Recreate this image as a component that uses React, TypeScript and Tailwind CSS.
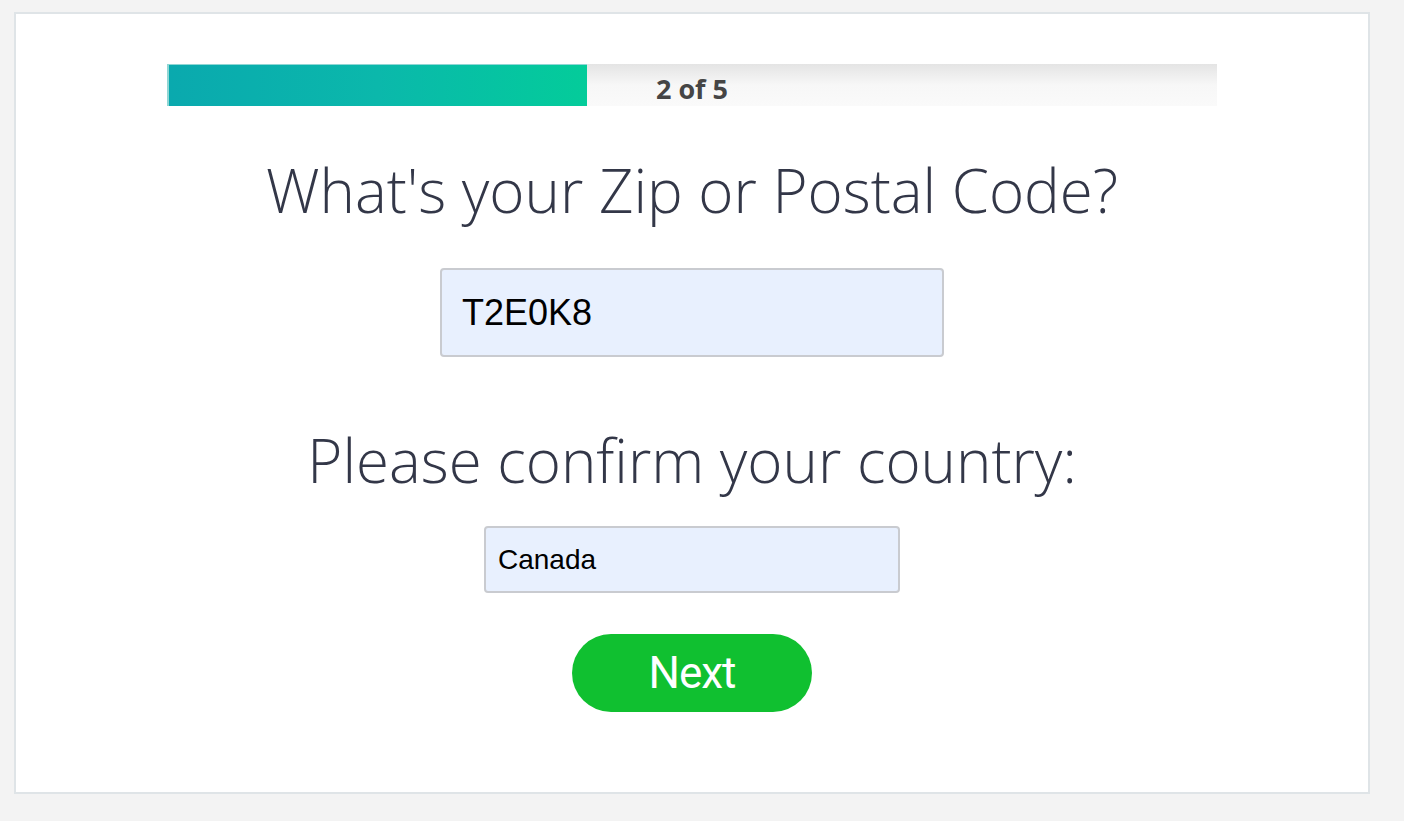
import React from 'react';

const App: React.FC = () => {
  return (
    <div className="min-h-screen bg-[#f3f3f3] pt-[12px] pl-[14px]" style={{ fontFamily: '"Open Sans", sans-serif' }}>
      <div className="w-[1356px] h-[782px] bg-white border-2 border-[#dfe4e7] flex flex-col items-center pt-[50px]">
        {/* Barra de progreso */}
        <div className="relative w-[1050px] h-[42px] bg-gradient-to-b from-[#e4e4e4] via-[#f7f7f7] to-[#fafafa]">
          <div className="absolute left-0 top-0 h-full w-[420px] bg-gradient-to-r from-[#0aa9ae] via-[#0bb8ab] to-[#04cc9a] border-t border-l-2 border-[#8fd6d4]" />
          <div className="absolute inset-0 flex items-center justify-center pt-[6px] text-[27px] font-bold text-[#454545] leading-none">
            2 of 5
          </div>
        </div>

        <h1 className="mt-[48px] text-[60px] font-light leading-[72px] text-[#333748]">
          What's your Zip or Postal Code?
        </h1>

        <input
          type="text"
          defaultValue="T2E0K8"
          className="mt-[42px] w-[504px] h-[89px] bg-[#e8f0fe] border-2 border-[#c9cbd0] rounded-[4px] px-[20px] text-[36px] text-black outline-none"
          style={{ fontFamily: '"Liberation Sans", Arial, sans-serif' }}
        />

        <h2 className="mt-[67px] text-[60px] font-light leading-[72px] text-[#333748]">
          Please confirm your country:
        </h2>

        <input
          type="text"
          defaultValue="Canada"
          className="mt-[30px] w-[416px] h-[67px] bg-[#e8f0fe] border-2 border-[#c9cbd0] rounded-[4px] px-[12px] text-[28px] text-black outline-none"
          style={{ fontFamily: '"Liberation Sans", Arial, sans-serif' }}
        />

        <button
          className="mt-[41px] w-[240px] h-[78px] rounded-full bg-[#10c030] text-white text-[44px] leading-none tracking-[-1px]"
          style={{ fontFamily: 'Roboto, sans-serif' }}
        >
          Next
        </button>
      </div>
    </div>
  );
};

export default App;
